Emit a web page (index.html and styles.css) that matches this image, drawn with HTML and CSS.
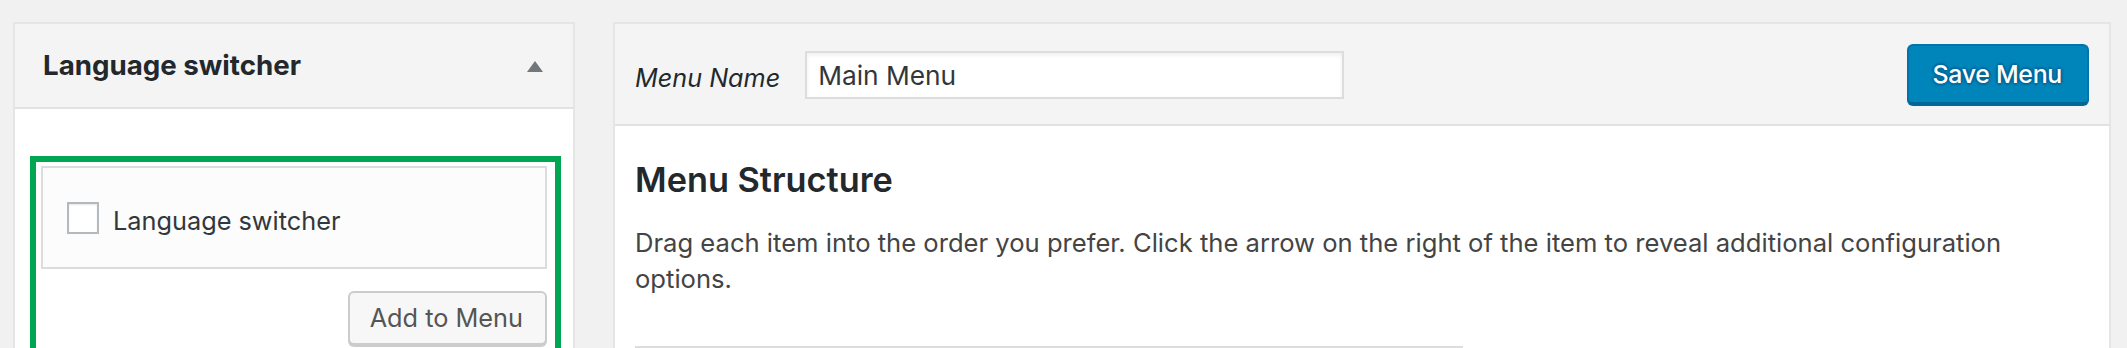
FILE: index.html
```html
<!DOCTYPE html>
<html lang="en">
<head>
<meta charset="utf-8">
<title>Menus</title>
<link rel="stylesheet" href="styles.css">
</head>
<body>
<div class="page">
  <div class="side-panel">
    <div class="side-head">
      <h3 class="side-title">Language switcher</h3>
      <svg class="toggle-arrow" width="16" height="11" viewBox="0 0 16 11" aria-hidden="true"><polygon points="8,0 16,11 0,11" fill="#72777c"/></svg>
    </div>
    <div class="side-body">
      <div class="highlight">
        <div class="item-list">
          <label class="item-row">
            <span class="checkbox"></span>
            <span class="item-label">Language switcher</span>
          </label>
        </div>
        <div class="add-row">
          <button class="btn-secondary" type="button">Add to Menu</button>
        </div>
      </div>
    </div>
  </div>

  <div class="menu-panel">
    <div class="menu-head">
      <span class="menu-name-label">Menu Name</span>
      <input class="menu-name-input" type="text" value="Main Menu">
      <button class="btn-primary" type="button">Save Menu</button>
    </div>
    <div class="menu-body">
      <h3 class="structure-title">Menu Structure</h3>
      <p class="structure-desc">Drag each item into the order you prefer. Click the arrow on the right of the item to reveal additional configuration options.</p>
      <div class="menu-item-bar"></div>
    </div>
  </div>
</div>
</body>
</html>
```
FILE: styles.css
```css
html, body {
  margin: 0;
  padding: 0;
  height: 100%;
  overflow: hidden;
  background: #f1f1f1;
}

body {
  font-family: "Inter", "Noto Sans", sans-serif;
  color: #444;
}

.page {
  height: 348px;
  box-sizing: border-box;
  display: flex;
  align-items: stretch;
  gap: 38px;
  padding: 22px 16px 0 13px;
}

/* ---------- left accordion panel ---------- */
.side-panel {
  width: 562px;
  flex: none;
  box-sizing: border-box;
  border: 2px solid #e5e5e5;
  border-bottom: none;
  background: #fff;
  display: flex;
  flex-direction: column;
  overflow: hidden;
}

.side-head {
  height: 83px;
  flex: none;
  display: flex;
  align-items: center;
  justify-content: space-between;
  padding: 0 30px 0 28px;
  background: #f4f4f4;
  border-bottom: 2px solid #e2e2e2;
}

.side-title {
  margin: 0;
  font-size: 27.7px;
  font-weight: 700;
  line-height: 83px;
  color: #23282d;
}

.toggle-arrow {
  display: block;
  margin-top: 2px;
}

.side-body {
  flex: 1;
  display: flex;
  flex-direction: column;
  padding: 47px 12px 0 15px;
}

.highlight {
  flex: 1;
  border: 6px solid #00a650;
  border-bottom: none;
  padding: 4px 8px 0 5px;
}

.item-list {
  height: 99px;
  border: 2px solid #dcdcdc;
  background: #fcfcfc;
  padding: 0 24px;
  display: flex;
  align-items: center;
}

.item-row {
  display: flex;
  align-items: center;
  gap: 14px;
}

.checkbox {
  width: 28px;
  height: 28px;
  border: 2px solid #b4b9be;
  background: #fff;
  box-shadow: inset 0 1px 2px rgba(0, 0, 0, 0.1);
  flex: none;
}

.item-label {
  font-size: 25.3px;
  line-height: 32px;
  margin-top: 6px;
  color: #32373c;
}

.add-row {
  display: flex;
  justify-content: flex-end;
  margin-top: 22px;
}

.btn-secondary {
  height: 54px;
  box-sizing: border-box;
  padding: 0 22px 0 20px;
  border: 2px solid #cccccc;
  border-radius: 6px;
  background: #f7f7f7;
  box-shadow: 0 2px 0 #cccccc;
  font-family: "Inter", "Noto Sans", sans-serif;
  font-size: 25.3px;
  line-height: 50px;
  color: #555;
}

/* ---------- right menu edit panel ---------- */
.menu-panel {
  flex: 1;
  min-width: 0;
  border: 2px solid #e5e5e5;
  border-bottom: none;
  background: #fff;
  overflow: hidden;
}

.menu-head {
  height: 100px;
  display: flex;
  align-items: center;
  padding: 0 20px;
  background: #f4f4f4;
  border-bottom: 2px solid #e2e2e2;
}

.menu-name-label {
  font-size: 25.2px;
  font-style: italic;
  line-height: 48px;
  margin-top: 7px;
  margin-right: 25px;
  color: #23282d;
}

.menu-name-input {
  width: 539px;
  height: 48px;
  box-sizing: border-box;
  margin: 2px 0 0 0;
  padding: 0 11px;
  border: 2px solid #dddddd;
  background: #fff;
  box-shadow: inset 0 2px 4px rgba(0, 0, 0, 0.07);
  font-family: "Inter", "Noto Sans", sans-serif;
  font-size: 26.3px;
  color: #32373c;
  outline: none;
}

.btn-primary {
  margin-left: auto;
  height: 60px;
  box-sizing: border-box;
  padding: 0 25px 0 24px;
  border: 2px solid #0073aa;
  border-bottom-color: #006799;
  border-radius: 6px;
  background: #0085ba;
  box-shadow: 0 2px 0 #006799;
  font-family: "Inter", "Noto Sans", sans-serif;
  font-size: 24.9px;
  font-weight: 500;
  letter-spacing: -0.3px;
  line-height: 56px;
  color: #fff;
  text-shadow: 0 -2px 2px #006799, 2px 0 2px #006799, 0 2px 2px #006799, -2px 0 2px #006799;
}

.menu-body {
  padding: 34px 20px 0 20px;
}

.structure-title {
  margin: 0;
  font-size: 34.3px;
  font-weight: 600;
  line-height: 40px;
  color: #23282d;
}

.structure-desc {
  margin: 25px 0 0 0;
  font-size: 25.6px;
  line-height: 36px;
  color: #444;
}

.menu-item-bar {
  width: 828px;
  height: 2px;
  margin-top: 49px;
  background: #dddddd;
}
```
